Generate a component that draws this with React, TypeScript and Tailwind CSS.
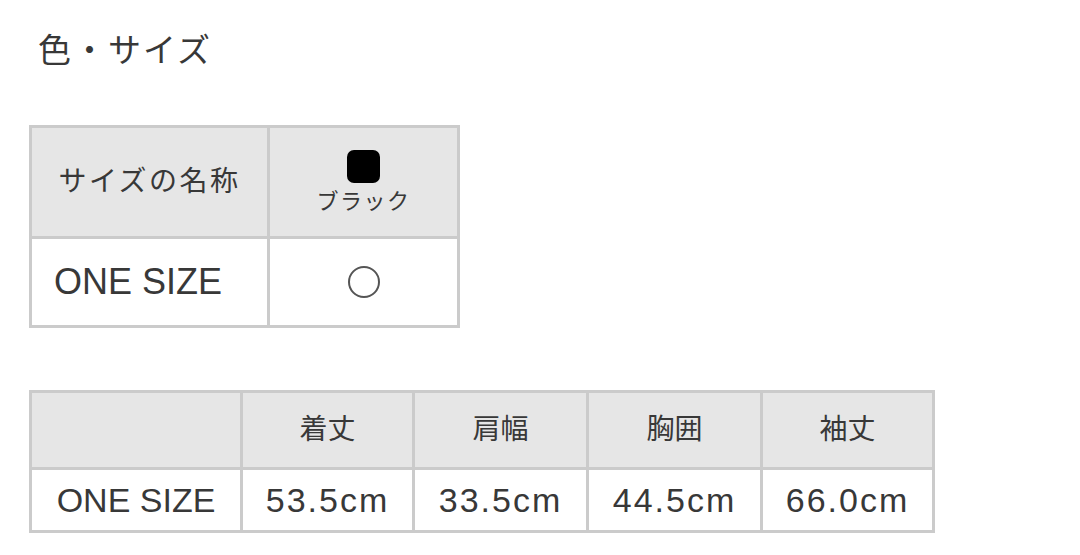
import React from "react";

const font = "font-['Liberation_Sans','Noto_Sans_CJK_JP',sans-serif]";

export default function App() {
  const heads = ["着丈", "肩幅", "胸囲", "袖丈"];
  const vals = ["53.5cm", "33.5cm", "44.5cm", "66.0cm"];
  const widths = ["w-[172px]", "w-[174px]", "w-[174px]", "w-[172px]"];
  return (
    <div className={`${font} bg-white w-[1080px] h-[555px] text-[#383838] pl-[29px] pt-[29px]`}>
      <h1 className="pl-[9px] text-[33px] leading-[44px] tracking-[2px] font-normal">色・サイズ</h1>

      <table className="mt-[52px] border-collapse table-fixed w-[431px] border-[3px] border-[#cbcbcb]">
        <tbody>
          <tr className="h-[111px] bg-[#e6e6e6]">
            <td className="w-[238px] border-[3px] border-[#cbcbcb] text-center text-[28px] tracking-[2.5px]">サイズの名称</td>
            <td className="border-[3px] border-[#cbcbcb]">
              <div className="flex flex-col items-center">
                <div className="w-[33px] h-[33px] rounded-[7px] bg-black" />
                <div className="mt-[6px] text-[22px] leading-[26px] tracking-[1.5px]">ブラック</div>
              </div>
            </td>
          </tr>
          <tr className="h-[89px]">
            <td className="border-[3px] border-[#cbcbcb] pl-[22px] text-left text-[36px]">ONE SIZE</td>
            <td className="border-[3px] border-[#cbcbcb]">
              <div className="flex justify-center">
                <div className="w-[32px] h-[32px] rounded-full border-2 border-[#555]" />
              </div>
            </td>
          </tr>
        </tbody>
      </table>

      <table className="mt-[62px] border-collapse table-fixed w-[903px] border-[3px] border-[#cbcbcb]">
        <tbody>
          <tr className="h-[77px] bg-[#e6e6e6]">
            <td className="w-[211px] border-[3px] border-[#cbcbcb]" />
            {heads.map((h, i) => (
              <td key={h} className={`${widths[i]} border-[3px] border-[#cbcbcb] text-center text-[28px]`}>{h}</td>
            ))}
          </tr>
          <tr className="h-[63px]">
            <td className="border-[3px] border-[#cbcbcb] text-center text-[34px]">ONE SIZE</td>
            {vals.map((v) => (
              <td key={v} className="border-[3px] border-[#cbcbcb] text-center text-[34px] tracking-[2px]">{v}</td>
            ))}
          </tr>
        </tbody>
      </table>
    </div>
  );
}
